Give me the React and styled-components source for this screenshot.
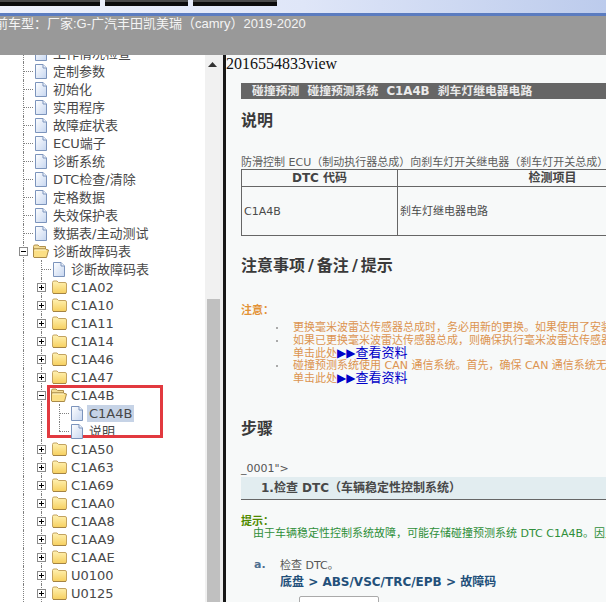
import React from "react";
import styled, { createGlobalStyle } from "styled-components";

const Global = createGlobalStyle`
  html, body { margin: 0; padding: 0; width: 606px; height: 602px; overflow: hidden; background: #fff; }
  * { box-sizing: border-box; }
`;

const CJK = `"DejaVu Sans", "Noto Sans CJK SC", sans-serif`;

const Page = styled.div`
  width: 606px; height: 602px; overflow: hidden;
  display: flex; flex-direction: column;
  font-family: ${CJK};
`;
const TopStrip = styled.div`
  height: 16px; flex: none; display: flex; gap: 5px; align-items: flex-start;
  background: linear-gradient(90deg, #eef1fb 0%, #dfe6f8 50%, #bccbec 100%);
  border-bottom: 3px solid #5b7cc0;
`;
const TabStub = styled.div`
  width: ${p => p.$w}px; height: 6px; flex: none;
  background: #4a4a4a; border-bottom: 4px solid #0c0c0c;
`;
const InfoBar = styled.div`
  height: 39px; flex: none; background: #999; overflow: hidden;
  color: #f4f4f4; font: 13px/15px "Liberation Sans", "Noto Sans CJK SC", sans-serif;
  white-space: nowrap; text-indent: -5px;
`;
const Body = styled.div`
  flex: 1; min-height: 0; display: flex;
`;
const TreePanel = styled.div`
  position: relative; width: 205px; flex: none; overflow: hidden; background: #fff;
`;
const TreeList = styled.div`
  margin-top: -11px; padding-left: 14px;
`;
const Row = styled.div`
  display: flex; align-items: center; height: 18px;
  font-size: 13px; color: #484848; white-space: nowrap;
`;
const Cell = styled.span`
  position: relative; width: 18px; height: 18px; flex: none;
  display: flex; align-items: center; justify-content: center;
  &::before {
    content: ""; position: absolute; left: 9px; top: 0;
    height: ${p => (p.$line === "l" ? "9px" : "18px")};
    border-left: ${p => (p.$line ? "1px dotted #808080" : "none")};
  }
  &::after {
    content: ""; position: absolute; left: 9px; top: 9px; width: 10px;
    border-top: ${p => (p.$line === "t" || p.$line === "l" ? "1px dotted #808080" : "none")};
  }
`;
const Expander = styled.span`
  position: relative; z-index: 1; width: 9px; height: 9px;
  background: #fff; border: 1px solid #8a8a8a;
  &::before {
    content: ""; position: absolute; left: 1px; right: 1px; top: 3px; height: 1px; background: #000;
  }
  &::after {
    content: ""; position: absolute; top: 1px; bottom: 1px; left: 3px; width: 1px;
    background: ${p => (p.$open ? "transparent" : "#000")};
  }
`;
const IconCell = styled.span`
  position: relative; z-index: 1; width: 18px; height: 18px; flex: none;
  display: flex; align-items: center; justify-content: center;
`;
const Label = styled.span`
  margin-left: 1px; padding: 0 2px; height: 17px; line-height: 17px;
  background: ${p => (p.$selected ? "#c6d3e6" : "transparent")};
`;
const RedFrame = styled.div`
  position: absolute; left: 47px; top: 330px; width: 116px; height: 53px;
  border: 3px solid #e2393f;
`;
const Scrollbar = styled.div`
  width: 18px; flex: none; background: #f1f1f1; border-right: 3px solid #ececec;
  display: flex; flex-direction: column; align-items: stretch;
`;
const ArrowBox = styled.div`
  height: 244px; display: flex; justify-content: center; padding-top: 7px;
`;
const Thumb = styled.div`
  flex: 1; margin: 0 0 0 2px; background: #c0c0c0;
`;
const Divider = styled.div`
  width: 3px; flex: none; background: #161616;
`;
const Content = styled.div`
  flex: 1; min-width: 0; overflow: hidden; background: #f7f9f9; color: #555;
  font-size: 11px; line-height: 13px; white-space: nowrap;
`;
const ViewId = styled.div`
  font: 16px/18px "Liberation Serif", serif; color: #111; height: 18px;
`;
const Inner = styled.div`
  padding-left: 15px;
`;
const TitleBar = styled.div`
  margin-top: 10px; height: 16px; background: #666; color: #ececec;
  font-size: 11.8px; line-height: 16px; font-weight: 700; padding-left: 11px;
  white-space: pre;
`;
const Heading = styled.h2`
  margin: ${p => p.$mt}px 0 0; font-size: 16px; line-height: 20px; font-weight: 700; color: #3a3a3a;
`;
const Slash = styled.span`
  padding: 0 3px;
`;
const Para = styled.div`
  margin-top: 25px; height: 13px; line-height: 13px; color: #5c5c5c;
`;
const Table = styled.table`
  width: 466px; table-layout: fixed; border-collapse: collapse; background: transparent;
  font-size: 11px;
  th, td { border: 1px solid #666; padding: 0 2px; }
  th { height: 17px; font-size: 12px; font-weight: 700; color: #444; text-align: center; }
  td { height: 49px; color: #4a4a4a; }
`;
const NoteTitle = styled.div`
  margin-top: 28px; font-weight: 700; color: #e39236;
`;
const NoteList = styled.ul`
  list-style: none; margin: 4px 0 0; padding: 0 0 0 52px; color: #dc9450;
`;
const NoteItem = styled.li`
  position: relative; line-height: 13px;
  &::before {
    content: ""; position: absolute; left: -17px; top: 6px; width: 2px; height: 2px; background: #aaa;
  }
`;
const LinkLine = styled.div`
  display: flex; align-items: center; height: 12px;
`;
const DocLink = styled.span`
  color: #0000c8; font-size: 13px; line-height: 12px;
`;
const Tri = styled.span`
  font-size: 12px; color: #0000c8; line-height: 12px;
`;
const Raw = styled.div`
  margin-top: 23px; color: #555;
`;
const StepBar = styled.div`
  margin-top: 2px; height: 23px; background: #e2edf0; border-bottom: 1px solid #666;
  padding-left: 20px; font-size: 12px; font-weight: 700; line-height: 23px; color: #484848;
`;
const HintTitle = styled.div`
  margin-top: 15px; font-weight: 700; color: #4f8a00;
`;
const HintText = styled.div`
  margin-top: -1px; padding-left: 12px; color: #2f8f3a;
`;
const StepLine = styled.div`
  margin-top: 18px; display: flex; gap: 13px; align-items: flex-start; padding-left: 13px;
`;
const StepMark = styled.span`
  font-weight: 700; color: #4f6f90; width: 13px;
`;
const StepBody = styled.div`
  line-height: 16px;
`;
const Crumb = styled.div`
  font-size: 12px; font-weight: 700; color: #23507a;
`;
const Figure = styled.div`
  margin: 6px 0 0 58px; width: 80px; height: 30px; background: #fff;
  border: 1px solid #aaa; border-radius: 2px;
`;

const Doc = () => (
  <svg width="14" height="15" viewBox="0 0 14 15">
    <defs>
      <linearGradient id="docg" x1="0" y1="0" x2="1" y2="1">
        <stop offset="0" stopColor="#ffffff" />
        <stop offset="1" stopColor="#c6d6f0" />
      </linearGradient>
    </defs>
    <path d="M1.5 .5H9L12.5 4V14.5H1.5Z" fill="url(#docg)" stroke="#7c94bc" />
    <path d="M9 .5V4H12.5" fill="#eef3fb" stroke="#7c94bc" />
  </svg>
);
const Closed = () => (
  <svg width="15" height="14" viewBox="0 0 15 14">
    <defs>
      <linearGradient id="fc" x1="0" y1="0" x2="0" y2="1">
        <stop offset="0" stopColor="#fff2b4" />
        <stop offset="1" stopColor="#f6cf5e" />
      </linearGradient>
    </defs>
    <path d="M.5 2.5Q.5 1 2 1H5L6.5 2.5H13Q14.5 2.5 14.5 4V12Q14.5 13.5 13 13.5H2Q.5 13.5 .5 12Z" fill="url(#fc)" stroke="#c3a360" />
    <path d="M1 13.6H14" stroke="#a08040" />
  </svg>
);
const Open = () => (
  <svg width="16" height="14" viewBox="0 0 16 14">
    <path d="M.5 2.5Q.5 1 2 1H5L6.5 2.5H12.5V5H.5Z" fill="#f3dc94" stroke="#b0904e" />
    <path d="M.5 13 L.5 5H12L15.5 6 13.5 13.5H1Z" fill="#fbdf85" stroke="#a98a48" />
    <path d="M1.5 6H13" stroke="#fff6cc" />
  </svg>
);

const docs1 = ["工作情况检查","定制参数","初始化","实用程序","故障症状表","ECU端子","诊断系统","DTC检查/清除","定格数据","失效保护表","数据表/主动测试"];
const before = ["C1A02","C1A10","C1A11","C1A14","C1A46","C1A47"];
const after = ["C1A50","C1A63","C1A69","C1AA0","C1AA8","C1AA9","C1AAE","U0100","U0125"];

const rows = [
  ...docs1.map(label => ({ label, guides: 0, conn: "t", icon: "doc" })),
  { label: "诊断故障码表", guides: 0, exp: "minus", icon: "open" },
  { label: "诊断故障码表", guides: 1, conn: "t", icon: "doc" },
  ...before.map(label => ({ label, guides: 1, exp: "plus", icon: "closed" })),
  { label: "C1A4B", guides: 1, exp: "minus", icon: "open" },
  { label: "C1A4B", guides: 2, conn: "t", icon: "doc", selected: true },
  { label: "说明", guides: 2, conn: "l", icon: "doc" },
  ...after.map(label => ({ label, guides: 1, exp: "plus", icon: "closed" })),
];

const TreeRow = ({ row }) => (
  <Row>
    {Array.from({ length: row.guides }, (_, i) => <Cell key={i} $line="v" />)}
    <Cell $line={row.exp ? "v" : row.conn}>
      {row.exp && <Expander $open={row.exp === "minus"} />}
    </Cell>
    <IconCell>
      {row.icon === "doc" && <Doc />}
      {row.icon === "closed" && <Closed />}
      {row.icon === "open" && <Open />}
    </IconCell>
    <Label $selected={row.selected}>{row.label}</Label>
  </Row>
);

const ViewLink = () => (
  <LinkLine>单击此处<Tri>▶▶</Tri><DocLink>查看资料</DocLink></LinkLine>
);

export default function App() {
  return (
    <Page>
      <Global />
      <TopStrip>
        <TabStub $w={100} />
        <TabStub $w={83} />
        <TabStub $w={84} />
      </TopStrip>
      <InfoBar>前车型：厂家:G-广汽丰田凯美瑞（camry）2019-2020</InfoBar>
      <Body>
        <TreePanel>
          <TreeList>
            {rows.map((r, i) => <TreeRow key={i} row={r} />)}
          </TreeList>
          <RedFrame />
        </TreePanel>
        <Scrollbar>
          <ArrowBox>
            <svg width="9" height="5" viewBox="0 0 9 5"><path d="M4.5 0L9 5H0Z" fill="#333" /></svg>
          </ArrowBox>
          <Thumb />
        </Scrollbar>
        <Divider />
        <Content>
          <ViewId>2016554833view</ViewId>
          <Inner>
            <TitleBar>{"碰撞预测  碰撞预测系统  C1A4B  刹车灯继电器电路"}</TitleBar>
            <Heading $mt={12}>说明</Heading>
            <Para>防滑控制 ECU（制动执行器总成）向刹车灯开关继电器（刹车灯开关总成）输出</Para>
            <Table>
              <colgroup><col width="156" /><col width="310" /></colgroup>
              <thead><tr><th>DTC 代码</th><th>检测项目</th></tr></thead>
              <tbody><tr><td>C1A4B</td><td>刹车灯继电器电路</td></tr></tbody>
            </Table>
            <Heading $mt={20}>注意事项<Slash>/</Slash>备注<Slash>/</Slash>提示</Heading>
            <NoteTitle>注意：</NoteTitle>
            <NoteList>
              <NoteItem>更换毫米波雷达传感器总成时，务必用新的更换。如果使用了安装在其他车辆上的传感器</NoteItem>
              <NoteItem>如果已更换毫米波雷达传感器总成，则确保执行毫米波雷达传感器校准。<ViewLink /></NoteItem>
              <NoteItem>碰撞预测系统使用 CAN 通信系统。首先，确保 CAN 通信系统无故障。<ViewLink /></NoteItem>
            </NoteList>
            <Heading $mt={35}>步骤</Heading>
            <Raw>_0001"&gt;</Raw>
            <StepBar>1.检查 DTC（车辆稳定性控制系统）</StepBar>
            <HintTitle>提示：</HintTitle>
            <HintText>由于车辆稳定性控制系统故障，可能存储碰撞预测系统 DTC C1A4B。因此</HintText>
            <StepLine>
              <StepMark>a.</StepMark>
              <StepBody>
                检查 DTC。
                <Crumb>底盘 &gt; ABS/VSC/TRC/EPB &gt; 故障码</Crumb>
              </StepBody>
            </StepLine>
            <Figure />
          </Inner>
        </Content>
      </Body>
    </Page>
  );
}
